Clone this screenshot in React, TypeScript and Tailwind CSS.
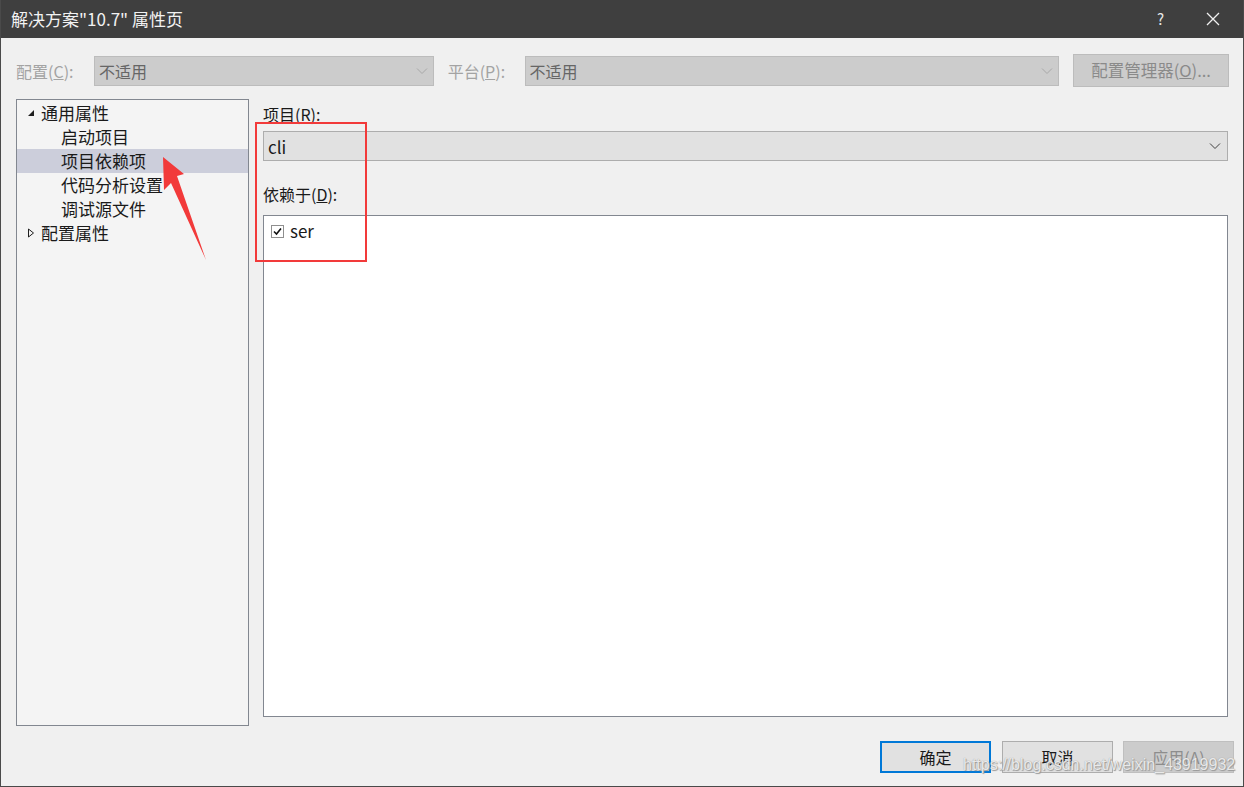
import React from "react";

const FONT = { fontFamily: '"Noto Sans CJK SC", "Noto Sans", sans-serif' };

function Chevron({ className = "" }: { className?: string }) {
  return (
    <svg width="12" height="8" viewBox="0 0 12 8" className={className}>
      <path d="M1 1.5 L6 6.5 L11 1.5" fill="none" stroke="currentColor" strokeWidth="1" />
    </svg>
  );
}

function TreeRow({
  label,
  level,
  toggle,
  selected,
}: {
  label: string;
  level: number;
  toggle?: "open" | "closed";
  selected?: boolean;
}) {
  return (
    <div className={`flex h-6 items-center ${selected ? "bg-[#cccedb]" : ""}`}>
      <div className="flex w-[24px] shrink-0 items-center justify-end pr-[6px]">
        {toggle === "open" && (
          <svg width="8" height="8" viewBox="0 0 8 8">
            <path d="M7 1 L7 7 L1 7 Z" fill="#1e1e1e" />
          </svg>
        )}
        {toggle === "closed" && (
          <svg width="8" height="10" viewBox="0 0 8 10">
            <path d="M1.5 1 L6.5 5 L1.5 9 Z" fill="none" stroke="#1e1e1e" strokeWidth="1" />
          </svg>
        )}
      </div>
      <span className={`text-[17px] leading-6 text-[#1a1a1a] ${level === 1 ? "pl-[20px]" : ""}`}>{label}</span>
    </div>
  );
}

export default function App() {
  return (
    <div
      className="relative flex h-[787px] w-[1244px] flex-col overflow-hidden border-x border-b border-[#4a4a4a] bg-[#f0f0f0]"
      style={FONT}
    >
      {/* title bar */}
      <div className="flex h-[38px] shrink-0 items-center bg-[#3f3f3f] pl-[10px] text-white">
        <span className="text-[17px] text-[#f2f2f2]">解决方案"10.7" 属性页</span>
        <div className="flex-1" />
        <span className="mr-[42px] text-[15px] text-[#e8e8e8]">?</span>
        <svg width="14" height="14" viewBox="0 0 14 14" className="mr-[23px]">
          <path d="M1 1 L13 13 M13 1 L1 13" stroke="#f0f0f0" strokeWidth="1.3" />
        </svg>
      </div>

      {/* config row */}
      <div className="mt-[16px] flex h-[33px] items-center pl-[15px] pr-[14px] text-[16px]">
        <span className="w-[78px] text-[#a3a3a3]">
          配置(<span className="underline">C</span>):
        </span>
        <div className="flex h-[30px] w-[340px] items-center border border-[#bcbcbc] bg-[#cccccc] pl-[4px] pr-[5px]">
          <span className="flex-1 text-[#666666]">不适用</span>
          <Chevron className="text-[#a8a8a8]" />
        </div>
        <span className="ml-[14px] w-[77px] text-[#a3a3a3]">
          平台(<span className="underline">P</span>):
        </span>
        <div className="flex h-[30px] w-[535px] items-center border border-[#bcbcbc] bg-[#cccccc] pl-[4px] pr-[5px]">
          <span className="flex-1 text-[#666666]">不适用</span>
          <Chevron className="text-[#a8a8a8]" />
        </div>
        <div className="ml-[14px] flex h-[33px] w-[156px] items-center justify-center border border-[#bcbcbc] bg-[#cccccc] text-[16.5px] text-[#8a8a8a]">
          配置管理器(<span className="underline">O</span>)...
        </div>
      </div>

      {/* main */}
      <div className="mt-[12px] flex pl-[15px] pr-[15px]">
        <div className="h-[627px] w-[233px] shrink-0 border border-[#828790] bg-[#f4f4f4] pt-[1px]">
          <TreeRow label="通用属性" level={0} toggle="open" />
          <TreeRow label="启动项目" level={1} />
          <TreeRow label="项目依赖项" level={1} selected />
          <TreeRow label="代码分析设置" level={1} />
          <TreeRow label="调试源文件" level={1} />
          <TreeRow label="配置属性" level={0} toggle="closed" />
        </div>

        <div className="ml-[14px] flex flex-1 flex-col">
          <span className="mt-[4px] text-[16px] leading-[22px] text-[#1a1a1a]">
            项目(<span className="underline">R</span>):
          </span>
          <div className="mt-[6px] flex h-[30px] items-center border border-[#adadad] bg-[#e1e1e1] pl-[4px] pr-[6px]">
            <span className="flex-1 pt-[2px] text-[17px] text-[#1a1a1a]">cli</span>
            <Chevron className="text-[#404040]" />
          </div>
          <span className="mt-[22px] text-[16px] leading-[22px] text-[#1a1a1a]">
            依赖于(<span className="underline">D</span>):
          </span>
          <div className="mt-[10px] h-[502px] border border-[#828790] bg-white pl-[7px] pt-[6px]">
            <div className="flex items-center">
              <div className="mt-[1px] flex h-[13px] w-[13px] items-center justify-center border border-[#8f8f8f] bg-white">
                <svg width="9" height="9" viewBox="0 0 9 9">
                  <path d="M1 4.5 L3.5 7 L8 1.5" fill="none" stroke="#111" strokeWidth="1.6" />
                </svg>
              </div>
              <span className="ml-[6px] text-[17px] leading-[18px] text-[#1a1a1a]">ser</span>
            </div>
          </div>
        </div>
      </div>

      {/* buttons */}
      <div className="mt-[15px] flex justify-end pr-[9px] text-[16px]">
        <div className="flex h-[32px] w-[111px] items-center justify-center border-2 border-[#0078d7] bg-[#e1e1e1] text-[#1a1a1a]">
          确定
        </div>
        <div className="ml-[11px] flex h-[32px] w-[111px] items-center justify-center border border-[#adadad] bg-[#e1e1e1] text-[#1a1a1a]">
          取消
        </div>
        <div className="ml-[10px] flex h-[32px] w-[111px] items-center justify-center border border-[#bfbfbf] bg-[#cccccc] text-[#8d8d8d]">
          应用(A)
        </div>
      </div>

      {/* annotation: red box */}
      <div className="absolute left-[254px] top-[122px] h-[140px] w-[112px] border-2 border-[#f23a3a]" />

      {/* annotation: arrow */}
      <svg className="absolute left-0 top-0" width="260" height="280" viewBox="0 0 260 280">
        <path d="M162 157 L183 174 L176 176 L205 260 L170 183 L163 190 Z" fill="#f23a3a" />
      </svg>

      {/* watermark */}
      <span
        className="absolute left-[962px] top-[755px] text-[16px] leading-[20px] text-white/80"
        style={{ fontFamily: '"Liberation Sans", Arial, sans-serif', textShadow: "0 0 1px #888, 1px 1px 1px #999" }}
      >
        https://blog.csdn.net/weixin_43919932
      </span>
    </div>
  );
}
